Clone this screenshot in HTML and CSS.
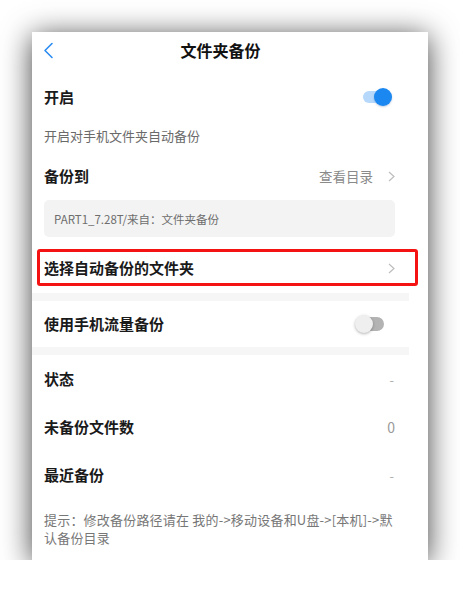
FILE: index.html
```html
<!DOCTYPE html>
<html lang="zh-CN">
<head>
<meta charset="utf-8">
<title>文件夹备份</title>
<link rel="stylesheet" href="styles.css">
</head>
<body>
<div class="page">
  <div class="card">
    <div class="screen">
      <div class="nav">
        <svg class="back" width="11" height="17" viewBox="0 0 11 17"><path d="M9 1.5 L2 8.5 L9 15.5" fill="none" stroke="#2b8cf0" stroke-width="1.6" stroke-linecap="round" stroke-linejoin="round"/></svg>
        <div class="title">文件夹备份</div>
        <div></div>
      </div>
      <div class="row row-open">
        <span class="label">开启</span>
        <span class="switch on"><span class="track"></span><span class="knob"></span></span>
      </div>
      <div class="desc">开启对手机文件夹自动备份</div>
      <div class="row row-dest">
        <span class="label">备份到</span>
        <span class="link">查看目录<svg class="chev" width="7" height="11" viewBox="0 0 7 11"><path d="M1 1 L6 5.5 L1 10" fill="none" stroke="#bdbdbd" stroke-width="1.2"/></svg></span>
      </div>
      <div class="pathbox">PART1_7.28T/来自：文件夹备份</div>
      <div class="row row-select">
        <span class="label">选择自动备份的文件夹</span>
        <svg class="chev" width="7" height="11" viewBox="0 0 7 11"><path d="M1 1 L6 5.5 L1 10" fill="none" stroke="#bdbdbd" stroke-width="1.2"/></svg>
      </div>
      <div class="sep"></div>
      <div class="row row-data">
        <span class="label">使用手机流量备份</span>
        <span class="switch off"><span class="track"></span><span class="knob"></span></span>
      </div>
      <div class="sep"></div>
      <div class="row row-info">
        <span class="label">状态</span>
        <span class="value dash">-</span>
      </div>
      <div class="row row-info">
        <span class="label">未备份文件数</span>
        <span class="value">0</span>
      </div>
      <div class="row row-info">
        <span class="label">最近备份</span>
        <span class="value dash">-</span>
      </div>
      <div class="hint">提示：修改备份路径请在 我的-&gt;移动设备和U盘-&gt;[本机]-&gt;默<br>认备份目录</div>
    </div>
    <div class="highlight"></div>
  </div>
</div>
</body>
</html>
```
FILE: styles.css
```css
html, body {
  margin: 0;
  padding: 0;
  background: #ffffff;
}
body {
  font-family: "Noto Sans CJK SC", "Noto Sans", "Liberation Sans", sans-serif;
  color: #1a1a1a;
}
.page {
  padding: 32px 0 0 32px;
}
.card {
  position: relative;
  width: 396px;
  height: 528px;
  background: #ffffff;
  box-shadow: 0 4px 28px rgba(0, 0, 0, 0.75);
}
.screen {
  width: 377px;
}
.nav {
  height: 36px;
  display: grid;
  grid-template-columns: 40px 1fr 40px;
  align-items: center;
  padding: 0 11px;
  box-sizing: border-box;
  width: 377px;
}
.back {
  display: block;
}
.title {
  text-align: center;
  font-size: 16px;
  font-weight: 700;
  color: #111;
  line-height: 20px;
}
.row {
  display: flex;
  align-items: center;
  justify-content: space-between;
  padding: 0 14px 0 12px;
}
.label {
  font-size: 15px;
  font-weight: 700;
  color: #1a1a1a;
  line-height: 20px;
}
.row-open {
  height: 58px;
}
.desc {
  font-size: 13px;
  line-height: 20px;
  color: #6a6a6a;
  padding: 0 12px 6px;
}
.row-dest {
  height: 48px;
}
.link {
  display: flex;
  align-items: center;
  font-size: 13.5px;
  color: #8a8a8a;
}
.link .chev {
  margin-left: 15px;
}
.chev {
  display: block;
}
.pathbox {
  margin: 0 14px 0 12px;
  height: 37px;
  border-radius: 5px;
  background: #f3f3f3;
  padding-left: 10px;
  display: flex;
  align-items: center;
  font-size: 11.5px;
  color: #6e6e6e;
}
.row-select {
  margin-top: 6px;
  height: 50px;
}
.sep {
  height: 8px;
  background: #f6f6f6;
}
.row-data {
  height: 46px;
}
.row-info {
  height: 48px;
}
.value {
  font-size: 14px;
  color: #9a9a9a;
}
.value.dash {
  font-size: 13px;
  color: #b0b0b0;
  margin-right: 1px;
}
.hint {
  padding: 12px 14px 0 12px;
  font-size: 13px;
  line-height: 18px;
  color: #777;
  letter-spacing: 0.2px;
}
.switch {
  position: relative;
  display: block;
  height: 18px;
}
.switch.on {
  width: 29px;
  margin-right: 3px;
}
.switch.on .track {
  position: absolute;
  left: 0;
  top: 3px;
  width: 25px;
  height: 12px;
  border-radius: 6px;
  background: #b6d8fb;
}
.switch.on .knob {
  position: absolute;
  right: 0;
  top: 0;
  width: 18px;
  height: 18px;
  border-radius: 50%;
  background: #1a88f0;
  box-shadow: 0 1px 2px rgba(0, 60, 140, 0.25);
}
.switch.off {
  width: 29px;
  margin-right: 11px;
}
.switch.off .track {
  position: absolute;
  left: 1px;
  top: 2px;
  width: 28px;
  height: 14px;
  border-radius: 7px;
  background: #b3b3b3;
}
.switch.off .knob {
  position: absolute;
  left: 0;
  top: 0;
  width: 18px;
  height: 18px;
  border-radius: 50%;
  background: #efefef;
  box-shadow: 0 1px 3px rgba(0, 0, 0, 0.3);
}
.highlight {
  position: absolute;
  left: 5px;
  top: 217px;
  width: 381px;
  height: 37px;
  box-sizing: border-box;
  border: 3px solid #f51212;
  border-radius: 3px;
}
```
